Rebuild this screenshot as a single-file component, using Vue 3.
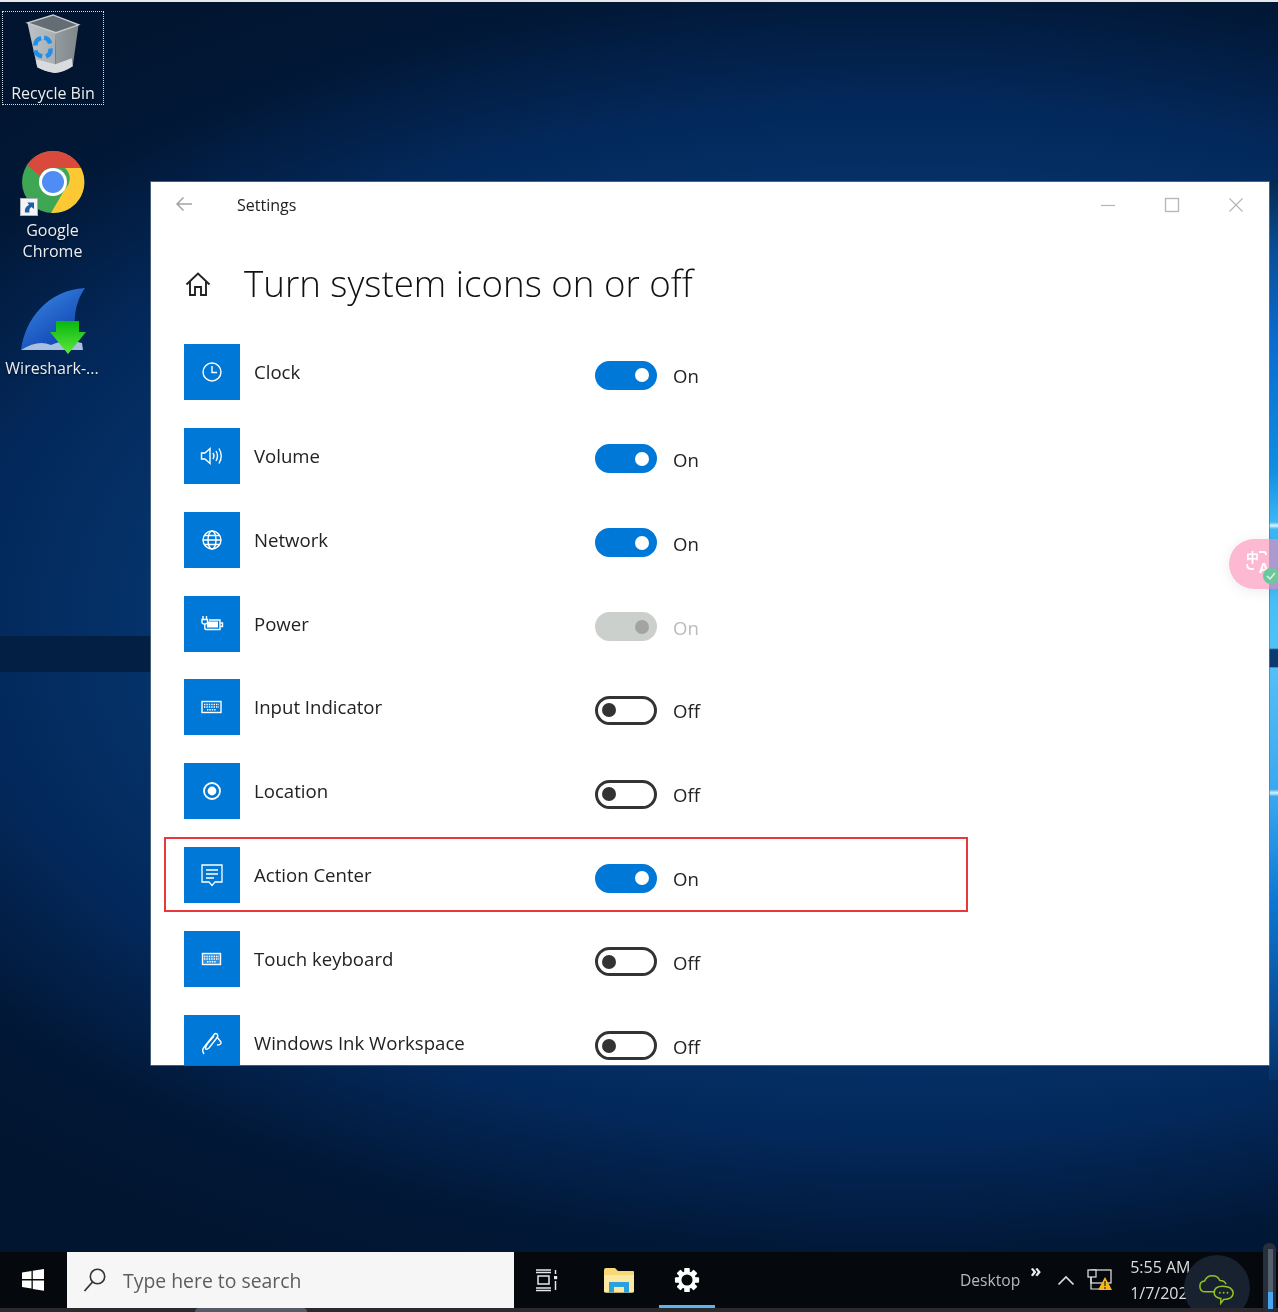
<script setup>
const rows = [
  { label: 'Clock', on: true, icon: 'clock' },
  { label: 'Volume', on: true, icon: 'volume' },
  { label: 'Network', on: true, icon: 'globe' },
  { label: 'Power', on: true, disabled: true, icon: 'power' },
  { label: 'Input Indicator', on: false, icon: 'keyboard' },
  { label: 'Location', on: false, icon: 'location' },
  { label: 'Action Center', on: true, icon: 'action' },
  { label: 'Touch keyboard', on: false, icon: 'keyboard2' },
  { label: 'Windows Ink Workspace', on: false, icon: 'ink' },
]
</script>

<template>
  <div class="desktop">
    <div class="topstrip"></div>
    <div class="band"></div>
    <div class="edge"></div>

    <div class="shortcut bin">
      <svg width="56" height="64" viewBox="25 13 56 64">
        <defs>
          <linearGradient id="binL" x1="0" x2="1" y1="0" y2="0">
            <stop offset="0" stop-color="#bcc2c5" /><stop offset="1" stop-color="#a8aeb2" />
          </linearGradient>
          <linearGradient id="binR" x1="0" x2="1" y1="0" y2="0">
            <stop offset="0" stop-color="#949b9f" /><stop offset="1" stop-color="#7f878b" />
          </linearGradient>
        </defs>
        <path d="M27 23 L56 33 L55 74 Q44 72 37 68 Z" fill="url(#binL)" />
        <path d="M56 33 L79 25 L73 67 Q64 73 55 74 Z" fill="url(#binR)" />
        <path d="M35.5 60 L55.5 65 L72 59 L73 67 Q64 73 55 74 Q44 72 37 68 Z" fill="#d9dcde" />
        <path d="M27 23 L53 15 L79 25 L56 33 Z" fill="#636d73" stroke="#c8cdd0" stroke-width="1.4" />
        <g fill="none" stroke="#1e90ea" stroke-width="4.6">
          <path d="M35 46 Q35 40 41 38.5 M44 38 Q49 39 50 44" />
          <path d="M50.5 49 Q51 55 46 57" />
          <path d="M42 57 Q36 56 35 51" />
        </g>
      </svg>
      <span>Recycle Bin</span>
    </div>

    <div class="shortcut chrome">
      <svg width="64" height="64" viewBox="0 0 64 64">
        <circle cx="32" cy="32" r="31" fill="#3fa653" />
        <path d="M32 1 A31 31 0 0 1 60 18 L32 18 A14 14 0 0 0 19 26 L6 15 A31 31 0 0 1 32 1 Z" fill="#d9493c" />
        <path d="M60 18 A31 31 0 0 1 30 63 L44 39 A14 14 0 0 0 44 18 Z" fill="#fcc934" />
        <circle cx="32" cy="32" r="14" fill="#fff" />
        <circle cx="32" cy="32" r="11" fill="#4f8df5" />
      </svg>
      <svg class="arrowbox" width="18" height="18" viewBox="0 0 18 18">
        <rect x="0.5" y="0.5" width="17" height="17" fill="#f2f4f6" stroke="#aab0b5" />
        <path d="M5 14.5 Q4 9 9 7 L7.5 4.5 L14 4.5 L14 11 L11.5 9 Q8.5 10.5 9.5 14.5 Z" fill="#1b5fa8" />
      </svg>
      <span>Google<br />Chrome</span>
    </div>

    <div class="shortcut shark">
      <svg width="68" height="68" viewBox="0 0 68 68">
        <defs>
          <linearGradient id="finG" x1="0" x2="0.7" y1="0" y2="1">
            <stop offset="0" stop-color="#3d8de8" /><stop offset="1" stop-color="#0d3fae" />
          </linearGradient>
          <linearGradient id="arrG" x1="0" x2="0" y1="0" y2="1">
            <stop offset="0" stop-color="#09b50f" /><stop offset="1" stop-color="#5be83e" />
          </linearGradient>
        </defs>
        <path d="M3 63 C7 32 30 3 67 1 C58 14 53 32 60 63 Z" fill="url(#finG)" />
        <path d="M3 63 Q20 52 33 58 Q48 51 64 56 L65 63 Z" fill="#a9bfe0" />
        <path d="M38 34 H61 V45 H68 L50 67 L32 45 H38 Z" fill="url(#arrG)" />
      </svg>
      <span>Wireshark-...</span>
    </div>

    <section class="window">
      <header class="titlebar">
        <svg class="back" width="20" height="16" viewBox="0 0 20 16"><path d="M17 8 H2 M8.5 1.5 L2 8 L8.5 14.5" fill="none" stroke="#a3a3a3" stroke-width="1.5" /></svg>
        <span class="title">Settings</span>
        <div class="controls">
          <svg width="16" height="16" viewBox="0 0 16 16"><path d="M1 8.5 H15" stroke="#b5b5b5" stroke-width="1.2" /></svg>
          <svg width="16" height="16" viewBox="0 0 16 16"><rect x="1.5" y="1.5" width="13" height="13" fill="none" stroke="#b5b5b5" stroke-width="1.3" /></svg>
          <svg width="16" height="16" viewBox="0 0 16 16"><path d="M1.5 1.5 L14.5 14.5 M14.5 1.5 L1.5 14.5" stroke="#b5b5b5" stroke-width="1.2" /></svg>
        </div>
      </header>

      <div class="heading">
        <svg width="28" height="26" viewBox="0 0 28 26"><path d="M2.5 13.5 L14 2.5 L25.5 13.5 M6 10.5 V24 H11 V16 H17 V24 H22 V10.5" fill="none" stroke="#222" stroke-width="1.9" /></svg>
        <h1>Turn system icons on or off</h1>
      </div>

      <div class="list">
        <div v-for="row in rows" :key="row.label" class="row">
          <div class="tile">
            <svg width="26" height="26" viewBox="0 0 26 26" fill="none" stroke="#fff" stroke-width="1.4">
              <template v-if="row.icon === 'clock'"><circle cx="13" cy="13" r="9" /><path d="M13 7 V13.5 H18" /></template>
              <template v-else-if="row.icon === 'volume'"><path d="M2.5 10 H6 L11 5.5 V20.5 L6 16 H2.5 Z" /><path d="M14 10 Q16 13 14 16 M17 8 Q20 13 17 18 M20 5.5 Q24.5 13 20 20.5" /></template>
              <template v-else-if="row.icon === 'globe'"><circle cx="13" cy="13" r="9" /><ellipse cx="13" cy="13" rx="4" ry="9" /><path d="M4 13 H22 M5.5 8.5 H20.5 M5.5 17.5 H20.5" /></template>
              <template v-else-if="row.icon === 'power'"><path d="M4 5 V8 M7.5 5 V8 M3 8.5 H8.5 V11 Q8.5 13 6 13 H5.5 Q3 13 3 11 Z M5.8 13 V17 Q5.8 18.5 7 18.5 H21 V9 H10" /><rect x="8" y="10.5" width="11" height="6" fill="#fff" stroke="none" /><path d="M21.5 12 H23.5 V15.5 H21.5" /></template>
              <template v-else-if="row.icon === 'keyboard'"><rect x="3" y="7.5" width="19" height="11" /><path d="M5 10.5 H20 M5 13 H20 M8 15.8 H17" stroke-dasharray="1.4 1" /></template>
              <template v-else-if="row.icon === 'keyboard2'"><rect x="3.5" y="7.5" width="18" height="11" fill="#fff" fill-opacity=".2" /><path d="M5 10.5 H20 M5 13 H20 M8 15.8 H17" stroke-dasharray="1.4 1" /></template>
              <template v-else-if="row.icon === 'location'"><circle cx="13" cy="13" r="8" stroke-width="1.8" /><circle cx="13" cy="13" r="4.4" fill="#fff" stroke="none" /></template>
              <template v-else-if="row.icon === 'action'"><path d="M3 3 H23 V20 H16 L13 23.5 L10 20 H3 Z" stroke-width="1.3" /><path d="M7 8 H19 M7 12 H19 M7 16 H15" /></template>
              <template v-else><path d="M5 24 Q2 20 6 16 L14 6 Q16 2.5 18 4 Q20 6 17 9 L10 18 Q7 20.5 6.5 18.5 Q6.5 16 9 13 L15 6" /><path d="M18 7 L22 12 Q22.5 15 18 15" /></template>
            </svg>
          </div>
          <span class="label">{{ row.label }}</span>
          <div class="state" :class="{ disabled: row.disabled }">
            <span class="toggle" :class="{ on: row.on }"><i></i></span>
            <span class="word">{{ row.on ? 'On' : 'Off' }}</span>
          </div>
        </div>
      </div>

      <div class="marker"></div>
    </section>

    <div class="translate">
      <span class="zh">中</span><span class="az">A</span>
      <svg class="brackets" width="30" height="30" viewBox="0 0 30 30" fill="none" stroke="#fff" stroke-width="1.8"><path d="M15 5 H20 Q22 5 22 8" /><path d="M3 17 Q3 22 7 22 H10" /></svg>
      <svg class="check" width="16" height="16" viewBox="0 0 16 16"><circle cx="8" cy="8" r="8" fill="#6cc79a" /><path d="M4 8 L7 11 L12 5" fill="none" stroke="#d8f2e4" stroke-width="1.5" /></svg>
    </div>

    <footer class="taskbar">
      <svg class="start" width="24" height="24" viewBox="0 0 24 24"><path d="M1 4.5 L10.5 3 V11 H1 Z M11.8 2.8 L23 1 V11 H11.8 Z M1 12.5 H10.5 V20.5 L1 19 Z M11.8 12.5 H23 V22.8 L11.8 21 Z" fill="#fff" /></svg>
      <div class="search">
        <svg width="26" height="26" viewBox="0 0 26 26"><circle cx="15.5" cy="9.5" r="7.2" fill="none" stroke="#333" stroke-width="1.6" /><path d="M10.5 15 L2.5 24" stroke="#333" stroke-width="1.8" /></svg>
        <span>Type here to search</span>
      </div>
      <div class="apps">
        <svg width="26" height="24" viewBox="0 0 26 24" fill="none" stroke="#e8e8e8" stroke-width="1.5"><path d="M2 2 H17 M2 4.5 H17 M4 8 H15 V16 H4 Z M2 20 H17 M2 22.5 H17 M21.5 2 V6 M21.5 13 V22" /><rect x="20" y="8" width="3.2" height="3.2" fill="#e8e8e8" stroke="none" /></svg>
        <svg width="32" height="26" viewBox="0 0 32 26"><path d="M1 3 Q1 1 3 1 H12 L15 4 H30 Q31 4 31 5 V24 Q31 25.5 29 25.5 H3 Q1 25.5 1 24 Z" fill="#f6d976" /><path d="M1 8 H31 V24 Q31 25.5 29 25.5 H3 Q1 25.5 1 24 Z" fill="#fbe9a2" /><path d="M6 25.5 V15 H26 V25.5 H21 V20 H11 V25.5 Z" fill="#2b9fe0" /></svg>
        <div class="gear">
          <svg width="26" height="26" viewBox="0 0 28 28"><g fill="#fff"><rect v-for="a in [0,45,90,135]" :key="a" x="11" y="1" width="6" height="26" rx="1" :transform="`rotate(${a} 14 14)`" /></g><circle cx="14" cy="14" r="9.5" fill="#fff" /><circle cx="14" cy="14" r="6" fill="#05090d" /></svg>
        </div>
      </div>
      <div class="tray">
        <span class="desk">Desktop</span>
        <span class="chev">»</span>
        <svg width="18" height="12" viewBox="0 0 18 12"><path d="M1.5 10.5 L9 3 L16.5 10.5" fill="none" stroke="#ddd" stroke-width="1.7" /></svg>
        <svg width="26" height="22" viewBox="0 0 26 22" fill="none" stroke="#e6e6e6" stroke-width="1.2"><rect x="4" y="1" width="20" height="13" /><rect x="1" y="1" width="8" height="7" fill="#05090d" /><path d="M4 8 V20 H14" /><path d="M18 8 L25 21 H11 Z" fill="#f5b81c" stroke="none" /><path d="M18 12 V17 M18 18 V20" stroke="#222" /></svg>
        <div class="clock"><span>5:55 AM</span><span>1/7/202</span></div>
      </div>
      <div class="bubble">
        <svg width="38" height="32" viewBox="0 0 40 32" fill="none" stroke="#8fc31f" stroke-width="1.6"><path d="M18 19 H8 Q2 19 2 13 Q2 8 7 7.5 Q9 2 15 2 Q21 2 23 7 Q28 7 29.5 11" /><path d="M26 13 Q36 13 37 20 Q37 27 27 27 L24 31 V26 Q17 25 17 20 Q17 13 26 13 Z" /><circle cx="23" cy="20" r="1" fill="#8fc31f" stroke="none" /><circle cx="27" cy="20" r="1" fill="#8fc31f" stroke="none" /><circle cx="31" cy="20" r="1" fill="#8fc31f" stroke="none" /></svg>
      </div>
    </footer>
    <div class="bottomline"><i></i></div>
    <div class="scroll"><i></i><b></b></div>
  </div>
</template>

<style>
html, body { margin: 0; background: #02183a; }
</style>

<style scoped>
.desktop {
  position: relative;
  width: 1278px;
  height: 1312px;
  overflow: hidden;
  font-family: "Open Sans", "Noto Sans", sans-serif;
  background:
    radial-gradient(ellipse 1300px 720px at 900px 620px, #0a5aa8 0%, #063c78 45%, #03285a 72%, rgba(2,26,60,.6) 88%, rgba(2,26,60,0) 100%),
    #011530;
  filter: blur(0.5px);
}
.topstrip { position: absolute; inset: 0 0 auto 0; height: 2px; background: #e8e8e8; }
.band { position: absolute; left: 0; top: 636px; width: 151px; height: 36px; background: #031f43; }
.edge {
  position: absolute; left: 1269px; top: 180px; width: 9px; height: 900px;
  background: linear-gradient(180deg, #04294f 0, #0a4f98 8%, #0a6cd0 18%, #0e8ee2 32%, #3cb6f5 38%, #d8f2ff 38.4%, #3cb6f5 38.8%, #4fc3f7 52%, #0b3a70 52.2%, #0b3a70 54.1%, #54bff7 54.2%, #3aa8f0 67.7%, #d8f2ff 68.1%, #3aa8f0 68.5%, #0c78d4 80%, #0a4f98 92%, #05336a 100%);
}
.shortcut {
  position: absolute;
  display: flex; flex-direction: column; align-items: center;
  color: #e9eef3; font-size: 16px; line-height: 21px; text-align: center;
  text-shadow: 0 1px 2px rgba(0,0,0,.6);
}
.bin { left: 2px; top: 11px; width: 100px; height: 92px; border: 1px dotted #d7dde2; }
.bin svg { margin-top: 1px; }
.bin span { margin-top: 7px; }
.chrome { left: 2px; top: 150px; width: 101px; }
.chrome span { margin-top: 6px; }
.arrowbox { position: absolute; left: 18px; top: 48px; }
.shark { left: 2px; top: 287px; width: 100px; }
.shark span { margin-top: 3px; white-space: nowrap; }

.window {
  position: absolute; left: 151px; top: 182px; width: 1118px; height: 883px;
  background: #fff; overflow: hidden; color: #1a1a1a;
  box-shadow: 0 0 0 1px rgba(100,120,140,.7);
}
.titlebar { display: flex; align-items: center; height: 46px; padding: 0 25px 0 24px; position: relative; }
.back { margin-right: 42px; margin-top: -3px; }
.title { font-size: 16px; color: #222; }
.controls { margin-left: auto; display: flex; gap: 48px; }
.heading { display: flex; align-items: center; gap: 32px; padding: 0 0 0 33px; height: 72px; margin-top: 20px; }
.heading svg { flex: none; }
h1 { margin: 0; font-size: 36.7px; font-weight: 300; color: #111; line-height: 48px; white-space: nowrap; margin-top: -2px; }
.list { display: flex; flex-direction: column; gap: 27.85px; padding: 24px 0 0 33px; }
.row { display: flex; height: 56px; align-items: center; flex: none; position: relative; }
.tile { width: 56px; height: 56px; background: #0078d7; display: flex; align-items: center; justify-content: center; flex: none; }
.label { width: 341px; margin-left: 14px; font-size: 18.6px; color: #222; margin-top: -1px; white-space: nowrap; }
.state { display: flex; align-items: center; gap: 16px; font-size: 18.6px; margin-top: 6px; color: #222; }
.word { margin-top: 1px; }
.toggle {
  width: 62px; height: 29px; box-sizing: border-box; border-radius: 15px;
  border: 3px solid #333; display: flex; align-items: center; padding: 0 4px; background: #fff;
}
.toggle i { width: 14px; height: 14px; border-radius: 50%; background: #333; }
.toggle.on { background: #0078d7; border-color: #0078d7; justify-content: flex-end; padding: 0 5px; }
.toggle.on i { background: #fff; }
.disabled { color: #bbb; }
.disabled .toggle { background: #ccd0cd; border-color: #ccd0cd; }
.disabled .toggle i { background: #a3a3a3; }
.marker { position: absolute; left: 13px; top: 655px; width: 804px; height: 75px; box-sizing: border-box; border: 2px solid #e8383c; pointer-events: none; }

.translate {
  position: absolute; left: 1229px; top: 539px; width: 60px; height: 50px;
  border-radius: 25px 0 0 25px; background: linear-gradient(90deg, #fdb9d2 40px, #a99bcf 40px); color: #fff;
  box-shadow: 0 2px 14px rgba(0,0,0,.08); font-weight: 700; font-size: 14px; line-height: 13px;
}
.zh { position: absolute; left: 17px; top: 11px; font-family: "Noto Sans CJK SC", sans-serif; font-size: 13px; line-height: 14px; font-weight: 700; }
.az { position: absolute; left: 30px; top: 23px; line-height: 12px; }
.brackets { position: absolute; left: 15px; top: 8px; }
.check { position: absolute; left: 34px; top: 29px; }

.taskbar {
  position: absolute; left: 0; right: 0; top: 1252px; height: 56px;
  background: #05090d; display: flex; align-items: center; color: #e0e0e0;
}
.start { margin-left: 21px; width: 24px; }
.search {
  margin-left: 22px; width: 447px; height: 56px; background: #f6f6f6; box-sizing: border-box;
  padding-left: 15px; display: flex; align-items: center; gap: 15px; color: #5d5d5d; font-size: 19.4px;
}
.apps { display: flex; align-items: center; gap: 43px; margin-left: 20px; }
.gear { position: relative; height: 56px; display: flex; align-items: center; width: 56px; justify-content: center; margin-left: -19px; }
.gear::after { content: ""; position: absolute; left: 0; right: 0; bottom: 0; height: 3px; background: #5fb3e8; }
.tray { position: absolute; left: 960px; top: 0; height: 56px; display: flex; align-items: center; }
.desk { font-size: 15.6px; color: #b9b9b9; }
.chev { margin: -20px 0 0 10px; font-size: 18px; font-weight: 700; color: #eee; width: 27px; }
.tray svg:nth-of-type(2) { margin-left: 12px; }
.clock { display: flex; flex-direction: column; margin-left: 17px; font-size: 16px; line-height: 26px; color: #ddd; white-space: nowrap; width: 70px; }
.bubble {
  position: absolute; left: 1184px; top: 3px; width: 66px; height: 66px; border-radius: 50%;
  background: #17212f; display: flex; align-items: flex-start; justify-content: center;
}
.bubble svg { margin-top: 18px; }
.bottomline { position: absolute; left: 0; right: 0; top: 1308px; height: 4px; background: #2b2b2f; }
.bottomline i { position: absolute; left: 195px; width: 112px; height: 4px; background: #565a66; border-radius: 4px 4px 0 0; display: block; }
.scroll { position: absolute; left: 1263px; top: 1243px; width: 13px; height: 69px; border-radius: 6px; background: #26303c; }
.scroll i { position: absolute; left: 5px; top: 6px; width: 5px; height: 44px; background: #55606c; display: block; }
.scroll b { position: absolute; left: 5px; top: 49px; width: 5px; height: 17px; background: #4aa7ef; display: block; }
</style>
